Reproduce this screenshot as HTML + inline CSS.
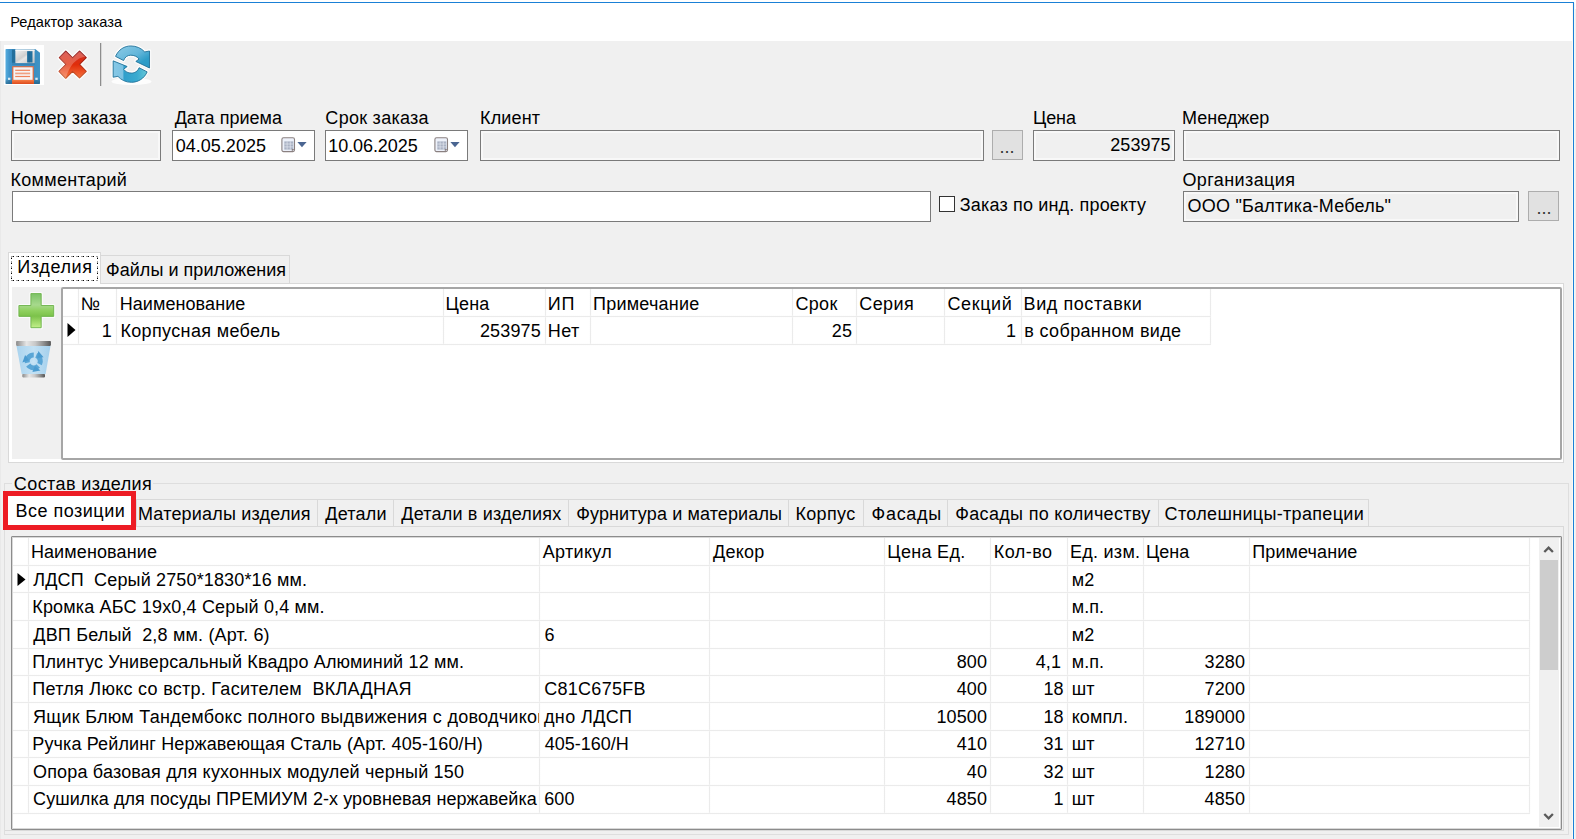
<!DOCTYPE html>
<html><head><meta charset="utf-8"><title>Редактор заказа</title>
<style>
html,body{margin:0;padding:0}
body{width:1576px;height:839px;position:relative;overflow:hidden;background:#fff;font-family:"Liberation Sans",sans-serif;font-size:18px;color:#000}
.a{position:absolute}
.t{position:absolute;white-space:pre}
svg{position:absolute;overflow:visible}
</style></head><body>
<div class="a" style="left:0px;top:41px;width:1572px;height:798px;background:#f0f0f0;"></div>
<div class="a" style="left:0px;top:41px;width:1px;height:798px;background:#e9e9e9;"></div>
<div class="a" style="left:1572px;top:3px;width:1px;height:836px;background:#fdf8f2;"></div>
<div class="a" style="left:0px;top:2px;width:1574px;height:1px;background:#1a80d6;"></div>
<div class="a" style="left:1573px;top:2px;width:1px;height:837px;background:#1a80d6;"></div>
<div class="a" style="left:1574px;top:3px;width:1px;height:836px;background:#f4f6f8;"></div>
<div class="a" style="left:1575px;top:9px;width:1px;height:830px;background:#efefef;"></div>
<div class="t" style="left:10.17px;top:14.00px;font-size:14.6px;line-height:16px;color:#000;letter-spacing:0.054px;">Редактор заказа</div>
<svg style="left:4px;top:45px" width="40" height="40" viewBox="0 0 40 40">
<defs>
<linearGradient id="fb" x1="0" x2="1" y1="0" y2="0"><stop offset="0" stop-color="#57aee0"/><stop offset="0.12" stop-color="#3f93c9"/><stop offset="0.75" stop-color="#3a8cc0"/><stop offset="1" stop-color="#3f93c4"/></linearGradient>
<linearGradient id="fs" x1="0" x2="1" y1="0" y2="1"><stop offset="0" stop-color="#f4f4f4"/><stop offset="0.45" stop-color="#cfcfcf"/><stop offset="0.55" stop-color="#e6e6e6"/><stop offset="1" stop-color="#bdbdbd"/></linearGradient>
<linearGradient id="fo" x1="0" x2="0" y1="0" y2="1"><stop offset="0" stop-color="#f67d45"/><stop offset="1" stop-color="#dd4a1c"/></linearGradient>
<linearGradient id="fv" x1="0" x2="0" y1="0" y2="1"><stop offset="0" stop-color="#000" stop-opacity="0"/><stop offset="0.85" stop-color="#000" stop-opacity="0"/><stop offset="1" stop-color="#0a3c5c" stop-opacity="0.45"/></linearGradient>
</defs>
<rect x="0" y="0" width="40" height="40" fill="#fff"/>
<path d="M2.3 4 H31.2 L36 7.8 V38.2 Q36 39 35.2 39 H2.3 Q1.5 39 1.5 38.2 V4.8 Q1.5 4 2.3 4Z" fill="url(#fb)"/>
<path d="M2.3 4 H31.2 L36 7.8 V38.2 Q36 39 35.2 39 H2.3 Q1.5 39 1.5 38.2 V4.8 Q1.5 4 2.3 4Z" fill="url(#fv)"/>
<rect x="7.9" y="4.6" width="3.6" height="13.2" fill="#246f9c"/>
<rect x="11.4" y="4.6" width="19.2" height="13.8" fill="url(#fs)"/>
<rect x="11.4" y="4.6" width="19.2" height="1.2" fill="#fafafa"/>
<rect x="23.1" y="6.2" width="5.4" height="11.3" fill="#23709e"/>
<rect x="24.6" y="6.2" width="1" height="11.3" fill="#1b5f8a" opacity="0.7"/>
<rect x="8" y="18.2" width="23" height="1.6" fill="#3581b3" opacity="0.9"/>
<rect x="8.2" y="21.2" width="21.6" height="17.8" fill="#ea6a3c"/>
<rect x="9.4" y="22.3" width="19.2" height="12.6" fill="#eef7fb"/>
<rect x="10.2" y="23" width="17.6" height="11.2" fill="#fdf3ee" opacity="0.55"/>
<rect x="11.2" y="24.7" width="14.9" height="1.2" fill="#ef8259"/>
<rect x="11.2" y="27.6" width="14.9" height="1.7" fill="#f0a183"/>
<rect x="11.2" y="30.9" width="14.9" height="1.2" fill="#ef8259"/>
<rect x="8.2" y="34.9" width="21.6" height="4.1" fill="url(#fo)"/>
<rect x="4" y="32.7" width="2.4" height="2.2" fill="#dbe9f2"/>
<rect x="31.3" y="32.7" width="2.4" height="2.2" fill="#dbe9f2"/>
</svg>
<svg style="left:50px;top:40px" width="50" height="50" viewBox="0 0 50 50">
<defs>
<linearGradient id="xr" x1="0" x2="0" y1="0" y2="1"><stop offset="0" stop-color="#d22f26"/><stop offset="0.5" stop-color="#e02d0a"/><stop offset="1" stop-color="#f7743f"/></linearGradient>
<linearGradient id="xs" x1="0" x2="0" y1="0" y2="1"><stop offset="0" stop-color="#8e1010"/><stop offset="0.6" stop-color="#b83318"/><stop offset="1" stop-color="#d0602f"/></linearGradient>
<clipPath id="xc"><path d="M9.38 17.56 L15.75 11.19 L22.60 17.84 L29.55 11.19 L36.21 17.56 L29.55 24.41 L36.21 31.35 L29.55 37.92 L22.60 31.35 L15.75 38.21 L9.09 31.35 L16.04 24.41Z"/></clipPath>
</defs>
<path d="M9.38 17.56 L15.75 11.19 L22.60 17.84 L29.55 11.19 L36.21 17.56 L29.55 24.41 L36.21 31.35 L29.55 37.92 L22.60 31.35 L15.75 38.21 L9.09 31.35 L16.04 24.41Z" fill="none" stroke="#fff" stroke-opacity="0.7" stroke-width="4" stroke-linejoin="round"/>
<path d="M9.38 17.56 L15.75 11.19 L22.60 17.84 L29.55 11.19 L36.21 17.56 L29.55 24.41 L36.21 31.35 L29.55 37.92 L22.60 31.35 L15.75 38.21 L9.09 31.35 L16.04 24.41Z" fill="url(#xr)" stroke="url(#xs)" stroke-width="1.2" stroke-linejoin="round"/>
<g clip-path="url(#xc)"><path d="M0 0 H42 L36.2 16.6 Q22 18 15.8 38 L0 50Z" fill="#fff" opacity="0.24"/></g>
</svg>
<svg style="left:95px;top:40px" width="62" height="50" viewBox="0 0 62 50">
<defs>
<linearGradient id="r1" x1="0" x2="1" y1="0" y2="1"><stop offset="0" stop-color="#8dcbe6"/><stop offset="0.5" stop-color="#63b6da"/><stop offset="0.75" stop-color="#2f9dc8"/><stop offset="1" stop-color="#2a97c4"/></linearGradient>
<linearGradient id="r2" x1="0" x2="1" y1="0" y2="0"><stop offset="0" stop-color="#86c8e6"/><stop offset="0.28" stop-color="#7cc2e2"/><stop offset="0.32" stop-color="#2f9fcb"/><stop offset="0.7" stop-color="#3aaad0"/><stop offset="1" stop-color="#66c8d6"/></linearGradient>
</defs>
<ellipse cx="36.5" cy="41.5" rx="20" ry="3.6" fill="#fff" opacity="0.85"/>
<path d="M20.56 16.39 C23.5 9.5 29.5 5.96 35.76 5.96 C41.5 5.96 46.2 8.2 49.76 11.92 L54.53 11.0 L54.53 28.01 L40.82 21.45 L44.1 19.07 C42.2 16.4 39 15.2 35.76 15.2 C32.5 15.2 29.8 17 28.6 20.56 Z" fill="none" stroke="#fff" stroke-opacity="0.8" stroke-width="3.4" stroke-linejoin="round"/>
<path d="M52.14 31.88 C49.2 38.6 43 42.31 36.35 42.31 C30.8 42.31 26.2 40 22.94 36.35 L18.18 37.2 L18.18 20.86 L32.18 26.52 L28.6 29.2 C30.3 31.8 33.2 33.07 36.35 33.07 C39.6 33.07 42.7 31.5 44.1 27.71 Z" fill="none" stroke="#fff" stroke-opacity="0.8" stroke-width="3.4" stroke-linejoin="round"/>
<path d="M20.56 16.39 C23.5 9.5 29.5 5.96 35.76 5.96 C41.5 5.96 46.2 8.2 49.76 11.92 L54.53 11.0 L54.53 28.01 L40.82 21.45 L44.1 19.07 C42.2 16.4 39 15.2 35.76 15.2 C32.5 15.2 29.8 17 28.6 20.56 Z" fill="url(#r1)" stroke="#1f7199" stroke-width="0.9" stroke-linejoin="round"/>
<path d="M52.14 31.88 C49.2 38.6 43 42.31 36.35 42.31 C30.8 42.31 26.2 40 22.94 36.35 L18.18 37.2 L18.18 20.86 L32.18 26.52 L28.6 29.2 C30.3 31.8 33.2 33.07 36.35 33.07 C39.6 33.07 42.7 31.5 44.1 27.71 Z" fill="url(#r2)" stroke="#1f7199" stroke-width="0.9" stroke-linejoin="round"/>
</svg>
<div class="a" style="left:100px;top:43px;width:1px;height:43px;background:#8d8d8d;"></div>
<div class="a" style="left:101px;top:43px;width:1px;height:43px;background:#d6d6d6;"></div>
<div class="t" style="left:10.79px;top:108.00px;font-size:18px;line-height:20px;color:#000;letter-spacing:0.092px;">Номер заказа</div>
<div class="t" style="left:174.65px;top:108.00px;font-size:18px;line-height:20px;color:#000;letter-spacing:0.030px;">Дата приема</div>
<div class="t" style="left:325.37px;top:108.00px;font-size:18px;line-height:20px;color:#000;letter-spacing:0.273px;">Срок заказа</div>
<div class="t" style="left:480.07px;top:108.00px;font-size:18px;line-height:20px;color:#000;letter-spacing:0.137px;">Клиент</div>
<div class="t" style="left:1033.07px;top:108.00px;font-size:18px;line-height:20px;color:#000;letter-spacing:-0.132px;">Цена</div>
<div class="t" style="left:1182.08px;top:108.00px;font-size:18px;line-height:20px;color:#000;letter-spacing:-0.003px;">Менеджер</div>
<div class="t" style="left:10.49px;top:170.00px;font-size:18px;line-height:20px;color:#000;letter-spacing:0.305px;">Комментарий</div>
<div class="t" style="left:1182.47px;top:170.00px;font-size:18px;line-height:20px;color:#000;letter-spacing:0.389px;">Организация</div>
<div class="a" style="left:11px;top:130px;width:150px;height:31px;background:#f0f0f0;border:1px solid #7a7a7a;box-sizing:border-box;box-shadow:inset 0 0 0 2px #f8f8f8;"></div>
<div class="a" style="left:172px;top:130px;width:143px;height:31px;background:#fff;border:1px solid #7a7a7a;box-sizing:border-box;"></div>
<div class="a" style="left:325px;top:130px;width:143px;height:31px;background:#fff;border:1px solid #7a7a7a;box-sizing:border-box;"></div>
<div class="a" style="left:480px;top:130px;width:504px;height:31px;background:#f0f0f0;border:1px solid #7a7a7a;box-sizing:border-box;box-shadow:inset 0 0 0 2px #f8f8f8;"></div>
<div class="a" style="left:1033px;top:130px;width:142px;height:31px;background:#f0f0f0;border:1px solid #7a7a7a;box-sizing:border-box;box-shadow:inset 0 0 0 2px #f8f8f8;"></div>
<div class="a" style="left:1183px;top:130px;width:377px;height:31px;background:#f0f0f0;border:1px solid #7a7a7a;box-sizing:border-box;box-shadow:inset 0 0 0 2px #f8f8f8;"></div>
<div class="a" style="left:12px;top:191px;width:919px;height:31px;background:#fff;border:1px solid #7a7a7a;box-sizing:border-box;"></div>
<div class="a" style="left:1183px;top:191px;width:336px;height:31px;background:#f0f0f0;border:1px solid #7a7a7a;box-sizing:border-box;box-shadow:inset 0 0 0 2px #f8f8f8;"></div>
<div class="t" style="left:175.67px;top:136.00px;font-size:18px;line-height:20px;color:#000;letter-spacing:0.024px;">04.05.2025</div>
<div class="t" style="left:328.29px;top:136.00px;font-size:18px;line-height:20px;color:#000;letter-spacing:-0.077px;">10.06.2025</div>
<div class="t" style="left:1110.28px;top:135.00px;font-size:18px;line-height:20px;color:#000;letter-spacing:0.058px;">253975</div>
<div class="t" style="left:1187.49px;top:196.00px;font-size:18px;line-height:20px;color:#000;letter-spacing:0.233px;">ООО &quot;Балтика-Мебель&quot;</div>
<div class="a" style="left:992px;top:130px;width:31px;height:30px;background:#e1e1e1;border:1px solid #adadad;box-sizing:border-box;"></div>
<div class="t" style="left:999.39px;top:137.00px;font-size:18px;line-height:20px;color:#333;letter-spacing:0.100px;">...</div>
<div class="a" style="left:1528px;top:191px;width:31px;height:30px;background:#e1e1e1;border:1px solid #adadad;box-sizing:border-box;"></div>
<div class="t" style="left:1536.40px;top:198.00px;font-size:18px;line-height:20px;color:#333;letter-spacing:0.100px;">...</div>
<div class="a" style="left:939px;top:196px;width:16px;height:16px;background:#fff;border:1px solid #333;box-sizing:border-box;"></div>
<div class="t" style="left:959.74px;top:195.00px;font-size:18px;line-height:20px;color:#000;letter-spacing:0.170px;">Заказ по инд. проекту</div>
<svg style="left:280.6px;top:136.6px" width="27" height="16" viewBox="0 0 27 16">
<rect x="0.9" y="0.8" width="12.6" height="13.8" rx="1.6" fill="#edf1fa" stroke="#8a8080" stroke-width="1.1"/>
<rect x="3.3" y="4.4" width="9" height="8.2" fill="#aab2c4"/>
<path d="M3.3 7 H12.3 M3.3 9.9 H12.3 M6.1 4.4 V12.6 M9.3 4.4 V12.6" stroke="#e9edf5" stroke-width="0.6"/>
<path d="M10.8 14.4 L13.3 11.9 L10.8 11.9Z" fill="#8a8080"/>
<path d="M16.4 5.1 H25.6 L21 10.3Z" fill="#4a6591"/>
</svg>
<svg style="left:433.6px;top:136.6px" width="27" height="16" viewBox="0 0 27 16">
<rect x="0.9" y="0.8" width="12.6" height="13.8" rx="1.6" fill="#edf1fa" stroke="#8a8080" stroke-width="1.1"/>
<rect x="3.3" y="4.4" width="9" height="8.2" fill="#aab2c4"/>
<path d="M3.3 7 H12.3 M3.3 9.9 H12.3 M6.1 4.4 V12.6 M9.3 4.4 V12.6" stroke="#e9edf5" stroke-width="0.6"/>
<path d="M10.8 14.4 L13.3 11.9 L10.8 11.9Z" fill="#8a8080"/>
<path d="M16.4 5.1 H25.6 L21 10.3Z" fill="#4a6591"/>
</svg>
<div class="a" style="left:8px;top:283px;width:1556px;height:180px;background:#fff;border:1px solid #d9d9d9;box-sizing:border-box;"></div>
<div class="a" style="left:12px;top:287px;width:50px;height:172px;background:#f0f0f0;"></div>
<div class="a" style="left:100px;top:255px;width:190px;height:29px;background:#f0f0f0;border:1px solid #d9d9d9;box-sizing:border-box;"></div>
<div class="a" style="left:8px;top:252px;width:93px;height:32px;background:#fff;border:1px solid #d9d9d9;box-sizing:border-box;border-bottom:none;"></div>
<div class="a" style="left:11px;top:256px;width:87px;height:1px;background:repeating-linear-gradient(90deg,#9a9a9a 0,#9a9a9a 2px,#000 2px,#000 3px,transparent 3px,transparent 5px);"></div>
<div class="a" style="left:11px;top:280px;width:87px;height:1px;background:repeating-linear-gradient(90deg,#9a9a9a 0,#9a9a9a 2px,#000 2px,#000 3px,transparent 3px,transparent 5px);"></div>
<div class="a" style="left:11px;top:256px;width:1px;height:25px;background:repeating-linear-gradient(180deg,#9a9a9a 0,#9a9a9a 2px,#000 2px,#000 3px,transparent 3px,transparent 5px);"></div>
<div class="a" style="left:97px;top:256px;width:1px;height:25px;background:repeating-linear-gradient(180deg,#9a9a9a 0,#9a9a9a 2px,#000 2px,#000 3px,transparent 3px,transparent 5px);"></div>
<div class="t" style="left:17.30px;top:257.00px;font-size:18px;line-height:20px;color:#000;letter-spacing:0.607px;">Изделия</div>
<div class="t" style="left:106.01px;top:260.00px;font-size:18px;line-height:20px;color:#000;letter-spacing:0.041px;">Файлы и приложения</div>
<svg style="left:14px;top:289px" width="44" height="44" viewBox="0 0 44 44">
<defs>
<linearGradient id="pg" x1="0" x2="0" y1="0" y2="1"><stop offset="0" stop-color="#7cc267"/><stop offset="0.33" stop-color="#a7d98d"/><stop offset="0.5" stop-color="#8fd05f"/><stop offset="0.66" stop-color="#7cc24a"/><stop offset="1" stop-color="#c2f08a"/></linearGradient>
</defs>
<path d="M16.9 4.6 H27.2 V16.5 H39.7 V27.4 H27.2 V38.7 H16.9 V27.4 H4.9 V16.5 H16.9 Z" fill="none" stroke="#fff" stroke-opacity="0.7" stroke-width="3.2" stroke-linejoin="round"/>
<path d="M16.9 4.6 H27.2 V16.5 H39.7 V27.4 H27.2 V38.7 H16.9 V27.4 H4.9 V16.5 H16.9 Z" fill="url(#pg)" stroke="#6cb24a" stroke-width="0.9" stroke-linejoin="round"/>
</svg>
<svg style="left:12px;top:337px" width="44" height="44" viewBox="0 0 44 44">
<defs>
<linearGradient id="tr" x1="0" x2="1" y1="0" y2="0"><stop offset="0" stop-color="#8a8a8a"/><stop offset="0.3" stop-color="#e6e6e6"/><stop offset="0.55" stop-color="#c8c8c8"/><stop offset="0.8" stop-color="#8c8c8c"/><stop offset="1" stop-color="#555"/></linearGradient>
<linearGradient id="tb" x1="0" x2="1" y1="0" y2="0"><stop offset="0" stop-color="#a9d3ee"/><stop offset="0.5" stop-color="#c3e1f4"/><stop offset="1" stop-color="#a3cfec"/></linearGradient>
</defs>
<path d="M4.5 9 H38.5 L33.6 37 H9.7Z" fill="url(#tb)"/>
<rect x="4.1" y="4" width="34.8" height="4.9" rx="0.8" fill="url(#tr)"/>
<rect x="10.3" y="36.9" width="22.7" height="3.5" rx="0.8" fill="url(#tr)"/>
<g transform="translate(21.7 24.4)">
<circle r="6.5" fill="none" stroke="#5aa6d6" stroke-width="5" stroke-dasharray="11.2 2.41" stroke-dashoffset="3" transform="rotate(-50)"/>
<g fill="#4a9bd0">
<path id="rh" d="M4.6 -10.4 L9.9 -4.2 L3.4 -3.4Z"/>
<use href="#rh" transform="rotate(120)"/>
<use href="#rh" transform="rotate(240)"/>
</g>
<path d="M0 -3.4 L1 -1 L3.2 1.6 L0.6 1.2 L0 3.4 L-0.8 1.2 L-3.2 1.6 L-1 -1Z" fill="#c6e3f5"/>
</g>
</svg>
<div class="a" style="left:61px;top:287px;width:1501px;height:173px;background:#fff;border:2px solid #a6a6a6;box-sizing:border-box;border-radius:2px;"></div>
<div class="a" style="left:77px;top:289px;width:3px;height:56px;background:linear-gradient(90deg,rgba(252,252,252,0) 0,rgba(250,250,250,0.6) 1px,#ebebeb 1px,#ebebeb 2px,rgba(250,250,250,0.6) 2px,rgba(252,252,252,0) 3px);"></div>
<div class="a" style="left:115px;top:289px;width:3px;height:56px;background:linear-gradient(90deg,rgba(252,252,252,0) 0,rgba(250,250,250,0.6) 1px,#ebebeb 1px,#ebebeb 2px,rgba(250,250,250,0.6) 2px,rgba(252,252,252,0) 3px);"></div>
<div class="a" style="left:442px;top:289px;width:3px;height:56px;background:linear-gradient(90deg,rgba(252,252,252,0) 0,rgba(250,250,250,0.6) 1px,#ebebeb 1px,#ebebeb 2px,rgba(250,250,250,0.6) 2px,rgba(252,252,252,0) 3px);"></div>
<div class="a" style="left:544px;top:289px;width:3px;height:56px;background:linear-gradient(90deg,rgba(252,252,252,0) 0,rgba(250,250,250,0.6) 1px,#ebebeb 1px,#ebebeb 2px,rgba(250,250,250,0.6) 2px,rgba(252,252,252,0) 3px);"></div>
<div class="a" style="left:589px;top:289px;width:3px;height:56px;background:linear-gradient(90deg,rgba(252,252,252,0) 0,rgba(250,250,250,0.6) 1px,#ebebeb 1px,#ebebeb 2px,rgba(250,250,250,0.6) 2px,rgba(252,252,252,0) 3px);"></div>
<div class="a" style="left:791px;top:289px;width:3px;height:56px;background:linear-gradient(90deg,rgba(252,252,252,0) 0,rgba(250,250,250,0.6) 1px,#ebebeb 1px,#ebebeb 2px,rgba(250,250,250,0.6) 2px,rgba(252,252,252,0) 3px);"></div>
<div class="a" style="left:855px;top:289px;width:3px;height:56px;background:linear-gradient(90deg,rgba(252,252,252,0) 0,rgba(250,250,250,0.6) 1px,#ebebeb 1px,#ebebeb 2px,rgba(250,250,250,0.6) 2px,rgba(252,252,252,0) 3px);"></div>
<div class="a" style="left:943px;top:289px;width:3px;height:56px;background:linear-gradient(90deg,rgba(252,252,252,0) 0,rgba(250,250,250,0.6) 1px,#ebebeb 1px,#ebebeb 2px,rgba(250,250,250,0.6) 2px,rgba(252,252,252,0) 3px);"></div>
<div class="a" style="left:1020px;top:289px;width:3px;height:56px;background:linear-gradient(90deg,rgba(252,252,252,0) 0,rgba(250,250,250,0.6) 1px,#ebebeb 1px,#ebebeb 2px,rgba(250,250,250,0.6) 2px,rgba(252,252,252,0) 3px);"></div>
<div class="a" style="left:1209px;top:289px;width:3px;height:56px;background:linear-gradient(90deg,rgba(252,252,252,0) 0,rgba(250,250,250,0.6) 1px,#ebebeb 1px,#ebebeb 2px,rgba(250,250,250,0.6) 2px,rgba(252,252,252,0) 3px);"></div>
<div class="a" style="left:63px;top:315px;width:1148px;height:3px;background:linear-gradient(180deg,rgba(252,252,252,0) 0,rgba(250,250,250,0.6) 1px,#ebebeb 1px,#ebebeb 2px,rgba(250,250,250,0.6) 2px,rgba(252,252,252,0) 3px);"></div>
<div class="a" style="left:63px;top:343px;width:1148px;height:3px;background:linear-gradient(180deg,rgba(252,252,252,0) 0,rgba(250,250,250,0.6) 1px,#ebebeb 1px,#ebebeb 2px,rgba(250,250,250,0.6) 2px,rgba(252,252,252,0) 3px);"></div>
<div class="t" style="left:80.71px;top:294.00px;font-size:18px;line-height:20px;color:#000;letter-spacing:0.100px;">№</div>
<div class="t" style="left:119.66px;top:294.00px;font-size:18px;line-height:20px;color:#000;letter-spacing:0.079px;">Наименование</div>
<div class="t" style="left:445.56px;top:294.00px;font-size:18px;line-height:20px;color:#000;letter-spacing:0.159px;">Цена</div>
<div class="t" style="left:547.66px;top:294.00px;font-size:18px;line-height:20px;color:#000;letter-spacing:0.891px;">ИП</div>
<div class="t" style="left:593.01px;top:294.00px;font-size:18px;line-height:20px;color:#000;letter-spacing:0.220px;">Примечание</div>
<div class="t" style="left:795.39px;top:294.00px;font-size:18px;line-height:20px;color:#000;letter-spacing:0.333px;">Срок</div>
<div class="t" style="left:859.22px;top:294.00px;font-size:18px;line-height:20px;color:#000;letter-spacing:0.420px;">Серия</div>
<div class="t" style="left:947.39px;top:294.00px;font-size:18px;line-height:20px;color:#000;letter-spacing:0.629px;">Секций</div>
<div class="t" style="left:1023.56px;top:294.00px;font-size:18px;line-height:20px;color:#000;letter-spacing:0.581px;">Вид поставки</div>
<div class="t" style="right:1464.23px;top:321.00px;font-size:18px;line-height:20px;color:#000;letter-spacing:0.100px;">1</div>
<div class="t" style="left:120.38px;top:321.00px;font-size:18px;line-height:20px;color:#000;letter-spacing:0.359px;">Корпусная мебель</div>
<div class="t" style="left:479.88px;top:321.00px;font-size:18px;line-height:20px;color:#000;letter-spacing:0.159px;">253975</div>
<div class="t" style="left:547.85px;top:321.00px;font-size:18px;line-height:20px;color:#000;letter-spacing:0.340px;">Нет</div>
<div class="t" style="right:724.00px;top:321.00px;font-size:18px;line-height:20px;color:#000;letter-spacing:0.100px;">25</div>
<div class="t" style="right:560.00px;top:321.00px;font-size:18px;line-height:20px;color:#000;letter-spacing:0.100px;">1</div>
<div class="t" style="left:1024.30px;top:321.00px;font-size:18px;line-height:20px;color:#000;letter-spacing:0.351px;">в собранном виде</div>
<svg style="left:67px;top:323px" width="9" height="14"><path d="M0.5 0 L8.5 7 L0.5 14Z" fill="#000"/></svg>
<div class="a" style="left:4px;top:483px;width:1565px;height:352px;border:1px solid #dedede;box-sizing:border-box;"></div>
<div class="a" style="left:12px;top:474px;width:141px;height:20px;background:#f0f0f0;"></div>
<div class="t" style="left:13.87px;top:474.00px;font-size:18px;line-height:20px;color:#000;letter-spacing:0.397px;">Состав изделия</div>
<div class="a" style="left:5px;top:526px;width:1559px;height:305px;border:1px solid #d9d9d9;box-sizing:border-box;border-left:none;"></div>
<div class="a" style="left:136px;top:499px;width:182px;height:28px;background:#f0f0f0;border:1px solid #d9d9d9;box-sizing:border-box;"></div>
<div class="t" style="left:137.95px;top:504.00px;font-size:18px;line-height:20px;color:#000;letter-spacing:0.196px;">Материалы изделия</div>
<div class="a" style="left:317px;top:499px;width:77px;height:28px;background:#f0f0f0;border:1px solid #d9d9d9;box-sizing:border-box;"></div>
<div class="t" style="left:325.32px;top:504.00px;font-size:18px;line-height:20px;color:#000;letter-spacing:0.215px;">Детали</div>
<div class="a" style="left:393px;top:499px;width:176px;height:28px;background:#f0f0f0;border:1px solid #d9d9d9;box-sizing:border-box;"></div>
<div class="t" style="left:401.32px;top:504.00px;font-size:18px;line-height:20px;color:#000;letter-spacing:0.183px;">Детали в изделиях</div>
<div class="a" style="left:568px;top:499px;width:221px;height:28px;background:#f0f0f0;border:1px solid #d9d9d9;box-sizing:border-box;"></div>
<div class="t" style="left:576.21px;top:504.00px;font-size:18px;line-height:20px;color:#000;letter-spacing:0.120px;">Фурнитура и материалы</div>
<div class="a" style="left:788px;top:499px;width:76px;height:28px;background:#f0f0f0;border:1px solid #d9d9d9;box-sizing:border-box;"></div>
<div class="t" style="left:795.44px;top:504.00px;font-size:18px;line-height:20px;color:#000;letter-spacing:0.329px;">Корпус</div>
<div class="a" style="left:863px;top:499px;width:85px;height:28px;background:#f0f0f0;border:1px solid #d9d9d9;box-sizing:border-box;"></div>
<div class="t" style="left:871.55px;top:504.00px;font-size:18px;line-height:20px;color:#000;letter-spacing:0.696px;">Фасады</div>
<div class="a" style="left:947px;top:499px;width:212px;height:28px;background:#f0f0f0;border:1px solid #d9d9d9;box-sizing:border-box;"></div>
<div class="t" style="left:955.26px;top:504.00px;font-size:18px;line-height:20px;color:#000;letter-spacing:0.321px;">Фасады по количеству</div>
<div class="a" style="left:1158px;top:499px;width:211px;height:28px;background:#f0f0f0;border:1px solid #d9d9d9;box-sizing:border-box;"></div>
<div class="t" style="left:1164.60px;top:504.00px;font-size:18px;line-height:20px;color:#000;letter-spacing:0.323px;">Столешницы-трапеции</div>
<div class="a" style="left:8px;top:496px;width:124px;height:31px;background:#fff;"></div>
<div class="a" style="left:3px;top:491px;width:133px;height:39px;border:5px solid #ed1c24;box-sizing:border-box;"></div>
<div class="t" style="left:15.38px;top:501.00px;font-size:18px;line-height:20px;color:#000;letter-spacing:0.512px;">Все позиции</div>
<div class="a" style="left:11px;top:536px;width:1551px;height:294px;background:#fff;border:1px solid #8c8c8c;box-sizing:border-box;box-shadow:inset 0 0 0 1px #d8d8d8;border-radius:1px;"></div>
<div class="a" style="left:13px;top:538px;width:1546px;height:289px;background:#fff;"></div>
<div class="a" style="left:27px;top:538px;width:3px;height:276px;background:linear-gradient(90deg,rgba(252,252,252,0) 0,rgba(250,250,250,0.6) 1px,#ebebeb 1px,#ebebeb 2px,rgba(250,250,250,0.6) 2px,rgba(252,252,252,0) 3px);"></div>
<div class="a" style="left:538px;top:538px;width:3px;height:276px;background:linear-gradient(90deg,rgba(252,252,252,0) 0,rgba(250,250,250,0.6) 1px,#ebebeb 1px,#ebebeb 2px,rgba(250,250,250,0.6) 2px,rgba(252,252,252,0) 3px);"></div>
<div class="a" style="left:708px;top:538px;width:3px;height:276px;background:linear-gradient(90deg,rgba(252,252,252,0) 0,rgba(250,250,250,0.6) 1px,#ebebeb 1px,#ebebeb 2px,rgba(250,250,250,0.6) 2px,rgba(252,252,252,0) 3px);"></div>
<div class="a" style="left:883px;top:538px;width:3px;height:276px;background:linear-gradient(90deg,rgba(252,252,252,0) 0,rgba(250,250,250,0.6) 1px,#ebebeb 1px,#ebebeb 2px,rgba(250,250,250,0.6) 2px,rgba(252,252,252,0) 3px);"></div>
<div class="a" style="left:989px;top:538px;width:3px;height:276px;background:linear-gradient(90deg,rgba(252,252,252,0) 0,rgba(250,250,250,0.6) 1px,#ebebeb 1px,#ebebeb 2px,rgba(250,250,250,0.6) 2px,rgba(252,252,252,0) 3px);"></div>
<div class="a" style="left:1066px;top:538px;width:3px;height:276px;background:linear-gradient(90deg,rgba(252,252,252,0) 0,rgba(250,250,250,0.6) 1px,#ebebeb 1px,#ebebeb 2px,rgba(250,250,250,0.6) 2px,rgba(252,252,252,0) 3px);"></div>
<div class="a" style="left:1142px;top:538px;width:3px;height:276px;background:linear-gradient(90deg,rgba(252,252,252,0) 0,rgba(250,250,250,0.6) 1px,#ebebeb 1px,#ebebeb 2px,rgba(250,250,250,0.6) 2px,rgba(252,252,252,0) 3px);"></div>
<div class="a" style="left:1248px;top:538px;width:3px;height:276px;background:linear-gradient(90deg,rgba(252,252,252,0) 0,rgba(250,250,250,0.6) 1px,#ebebeb 1px,#ebebeb 2px,rgba(250,250,250,0.6) 2px,rgba(252,252,252,0) 3px);"></div>
<div class="a" style="left:1528px;top:538px;width:3px;height:276px;background:linear-gradient(90deg,rgba(252,252,252,0) 0,rgba(250,250,250,0.6) 1px,#ebebeb 1px,#ebebeb 2px,rgba(250,250,250,0.6) 2px,rgba(252,252,252,0) 3px);"></div>
<div class="a" style="left:13px;top:564px;width:1517px;height:3px;background:linear-gradient(180deg,rgba(252,252,252,0) 0,rgba(250,250,250,0.6) 1px,#ebebeb 1px,#ebebeb 2px,rgba(250,250,250,0.6) 2px,rgba(252,252,252,0) 3px);"></div>
<div class="a" style="left:13px;top:591px;width:1517px;height:3px;background:linear-gradient(180deg,rgba(252,252,252,0) 0,rgba(250,250,250,0.6) 1px,#ebebeb 1px,#ebebeb 2px,rgba(250,250,250,0.6) 2px,rgba(252,252,252,0) 3px);"></div>
<div class="a" style="left:13px;top:619px;width:1517px;height:3px;background:linear-gradient(180deg,rgba(252,252,252,0) 0,rgba(250,250,250,0.6) 1px,#ebebeb 1px,#ebebeb 2px,rgba(250,250,250,0.6) 2px,rgba(252,252,252,0) 3px);"></div>
<div class="a" style="left:13px;top:647px;width:1517px;height:3px;background:linear-gradient(180deg,rgba(252,252,252,0) 0,rgba(250,250,250,0.6) 1px,#ebebeb 1px,#ebebeb 2px,rgba(250,250,250,0.6) 2px,rgba(252,252,252,0) 3px);"></div>
<div class="a" style="left:13px;top:674px;width:1517px;height:3px;background:linear-gradient(180deg,rgba(252,252,252,0) 0,rgba(250,250,250,0.6) 1px,#ebebeb 1px,#ebebeb 2px,rgba(250,250,250,0.6) 2px,rgba(252,252,252,0) 3px);"></div>
<div class="a" style="left:13px;top:701px;width:1517px;height:3px;background:linear-gradient(180deg,rgba(252,252,252,0) 0,rgba(250,250,250,0.6) 1px,#ebebeb 1px,#ebebeb 2px,rgba(250,250,250,0.6) 2px,rgba(252,252,252,0) 3px);"></div>
<div class="a" style="left:13px;top:729px;width:1517px;height:3px;background:linear-gradient(180deg,rgba(252,252,252,0) 0,rgba(250,250,250,0.6) 1px,#ebebeb 1px,#ebebeb 2px,rgba(250,250,250,0.6) 2px,rgba(252,252,252,0) 3px);"></div>
<div class="a" style="left:13px;top:756px;width:1517px;height:3px;background:linear-gradient(180deg,rgba(252,252,252,0) 0,rgba(250,250,250,0.6) 1px,#ebebeb 1px,#ebebeb 2px,rgba(250,250,250,0.6) 2px,rgba(252,252,252,0) 3px);"></div>
<div class="a" style="left:13px;top:784px;width:1517px;height:3px;background:linear-gradient(180deg,rgba(252,252,252,0) 0,rgba(250,250,250,0.6) 1px,#ebebeb 1px,#ebebeb 2px,rgba(250,250,250,0.6) 2px,rgba(252,252,252,0) 3px);"></div>
<div class="a" style="left:13px;top:812px;width:1517px;height:3px;background:linear-gradient(180deg,rgba(252,252,252,0) 0,rgba(250,250,250,0.6) 1px,#ebebeb 1px,#ebebeb 2px,rgba(250,250,250,0.6) 2px,rgba(252,252,252,0) 3px);"></div>
<div class="t" style="left:30.88px;top:542.00px;font-size:18px;line-height:20px;color:#000;letter-spacing:0.114px;">Наименование</div>
<div class="t" style="left:542.67px;top:542.00px;font-size:18px;line-height:20px;color:#000;letter-spacing:0.339px;">Артикул</div>
<div class="t" style="left:713.06px;top:542.00px;font-size:18px;line-height:20px;color:#000;letter-spacing:0.235px;">Декор</div>
<div class="t" style="left:887.30px;top:542.00px;font-size:18px;line-height:20px;color:#000;letter-spacing:0.301px;">Цена Ед.</div>
<div class="t" style="left:993.85px;top:542.00px;font-size:18px;line-height:20px;color:#000;letter-spacing:0.438px;">Кол-во</div>
<div class="t" style="left:1069.88px;top:542.00px;font-size:18px;line-height:20px;color:#000;letter-spacing:0.281px;">Ед. изм.</div>
<div class="t" style="left:1145.88px;top:542.00px;font-size:18px;line-height:20px;color:#000;letter-spacing:0.057px;">Цена</div>
<div class="t" style="left:1252.30px;top:542.00px;font-size:18px;line-height:20px;color:#000;letter-spacing:0.093px;">Примечание</div>
<div class="a" style="left:29px;top:566px;width:510px;height:27px;overflow:hidden">
<div class="t" style="left:4.30px;top:4.00px;font-size:18px;line-height:20px;color:#000;letter-spacing:0.146px;">ЛДСП  Серый 2750*1830*16 мм.</div>
</div>
<div class="t" style="left:1071.70px;top:570.00px;font-size:18px;line-height:20px;color:#000;letter-spacing:0.100px;">м2</div>
<div class="a" style="left:29px;top:593px;width:510px;height:27px;overflow:hidden">
<div class="t" style="left:3.30px;top:4.00px;font-size:18px;line-height:20px;color:#000;letter-spacing:0.157px;">Кромка АБС 19х0,4 Серый 0,4 мм.</div>
</div>
<div class="t" style="left:1071.70px;top:597.00px;font-size:18px;line-height:20px;color:#000;letter-spacing:0.100px;">м.п.</div>
<div class="a" style="left:29px;top:621px;width:510px;height:27px;overflow:hidden">
<div class="t" style="left:4.30px;top:4.00px;font-size:18px;line-height:20px;color:#000;letter-spacing:0.184px;">ДВП Белый  2,8 мм. (Арт. 6)</div>
</div>
<div class="t" style="left:544.50px;top:625.00px;font-size:18px;line-height:20px;color:#000;letter-spacing:0.100px;">6</div>
<div class="t" style="left:1071.70px;top:625.00px;font-size:18px;line-height:20px;color:#000;letter-spacing:0.100px;">м2</div>
<div class="a" style="left:29px;top:649px;width:510px;height:27px;overflow:hidden">
<div class="t" style="left:3.30px;top:3.00px;font-size:18px;line-height:20px;color:#000;letter-spacing:0.158px;">Плинтус Универсальный Квадро Алюминий 12 мм.</div>
</div>
<div class="t" style="right:589.00px;top:652.00px;font-size:18px;line-height:20px;color:#000;letter-spacing:0.100px;">800</div>
<div class="t" style="right:515.00px;top:652.00px;font-size:18px;line-height:20px;color:#000;letter-spacing:0.100px;">4,1</div>
<div class="t" style="left:1071.70px;top:652.00px;font-size:18px;line-height:20px;color:#000;letter-spacing:0.100px;">м.п.</div>
<div class="t" style="right:331.00px;top:652.00px;font-size:18px;line-height:20px;color:#000;letter-spacing:0.100px;">3280</div>
<div class="a" style="left:29px;top:676px;width:510px;height:27px;overflow:hidden">
<div class="t" style="left:3.30px;top:3.00px;font-size:18px;line-height:20px;color:#000;letter-spacing:0.270px;">Петля Люкс со встр. Гасителем  ВКЛАДНАЯ</div>
</div>
<div class="t" style="left:544.27px;top:679.00px;font-size:18px;line-height:20px;color:#000;letter-spacing:0.269px;">C81C675FB</div>
<div class="t" style="right:589.00px;top:679.00px;font-size:18px;line-height:20px;color:#000;letter-spacing:0.100px;">400</div>
<div class="t" style="right:512.33px;top:679.00px;font-size:18px;line-height:20px;color:#000;letter-spacing:0.100px;">18</div>
<div class="t" style="left:1071.70px;top:679.00px;font-size:18px;line-height:20px;color:#000;letter-spacing:0.100px;">шт</div>
<div class="t" style="right:331.00px;top:679.00px;font-size:18px;line-height:20px;color:#000;letter-spacing:0.100px;">7200</div>
<div class="a" style="left:29px;top:703px;width:510px;height:27px;overflow:hidden">
<div class="t" style="left:4.10px;top:4.00px;font-size:18px;line-height:20px;color:#000;letter-spacing:0.265px;">Ящик Блюм Тандембокс полного выдвижения с доводчиком</div>
</div>
<div class="t" style="left:543.97px;top:707.00px;font-size:18px;line-height:20px;color:#000;letter-spacing:0.380px;">дно ЛДСП</div>
<div class="t" style="right:589.00px;top:707.00px;font-size:18px;line-height:20px;color:#000;letter-spacing:0.100px;">10500</div>
<div class="t" style="right:512.33px;top:707.00px;font-size:18px;line-height:20px;color:#000;letter-spacing:0.100px;">18</div>
<div class="t" style="left:1071.70px;top:707.00px;font-size:18px;line-height:20px;color:#000;letter-spacing:0.100px;">компл.</div>
<div class="t" style="right:331.00px;top:707.00px;font-size:18px;line-height:20px;color:#000;letter-spacing:0.100px;">189000</div>
<div class="a" style="left:29px;top:731px;width:510px;height:27px;overflow:hidden">
<div class="t" style="left:3.30px;top:3.00px;font-size:18px;line-height:20px;color:#000;letter-spacing:0.130px;">Ручка Рейлинг Нержавеющая Сталь (Арт. 405-160/H)</div>
</div>
<div class="t" style="left:544.80px;top:734.00px;font-size:18px;line-height:20px;color:#000;letter-spacing:0.002px;">405-160/H</div>
<div class="t" style="right:589.00px;top:734.00px;font-size:18px;line-height:20px;color:#000;letter-spacing:0.100px;">410</div>
<div class="t" style="right:512.27px;top:734.00px;font-size:18px;line-height:20px;color:#000;letter-spacing:0.100px;">31</div>
<div class="t" style="left:1071.70px;top:734.00px;font-size:18px;line-height:20px;color:#000;letter-spacing:0.100px;">шт</div>
<div class="t" style="right:331.00px;top:734.00px;font-size:18px;line-height:20px;color:#000;letter-spacing:0.100px;">12710</div>
<div class="a" style="left:29px;top:758px;width:510px;height:27px;overflow:hidden">
<div class="t" style="left:4.03px;top:4.00px;font-size:18px;line-height:20px;color:#000;letter-spacing:0.177px;">Опора базовая для кухонных модулей черный 150</div>
</div>
<div class="t" style="right:589.00px;top:762.00px;font-size:18px;line-height:20px;color:#000;letter-spacing:0.100px;">40</div>
<div class="t" style="right:512.24px;top:762.00px;font-size:18px;line-height:20px;color:#000;letter-spacing:0.100px;">32</div>
<div class="t" style="left:1071.70px;top:762.00px;font-size:18px;line-height:20px;color:#000;letter-spacing:0.100px;">шт</div>
<div class="t" style="right:331.00px;top:762.00px;font-size:18px;line-height:20px;color:#000;letter-spacing:0.100px;">1280</div>
<div class="a" style="left:29px;top:786px;width:510px;height:27px;overflow:hidden">
<div class="t" style="left:4.07px;top:3.00px;font-size:18px;line-height:20px;color:#000;letter-spacing:0.072px;">Сушилка для посуды ПРЕМИУМ 2-х уровневая нержавейка</div>
</div>
<div class="t" style="left:544.27px;top:789.00px;font-size:18px;line-height:20px;color:#000;letter-spacing:0.067px;">600</div>
<div class="t" style="right:589.00px;top:789.00px;font-size:18px;line-height:20px;color:#000;letter-spacing:0.100px;">4850</div>
<div class="t" style="right:512.27px;top:789.00px;font-size:18px;line-height:20px;color:#000;letter-spacing:0.100px;">1</div>
<div class="t" style="left:1071.70px;top:789.00px;font-size:18px;line-height:20px;color:#000;letter-spacing:0.100px;">шт</div>
<div class="t" style="right:331.00px;top:789.00px;font-size:18px;line-height:20px;color:#000;letter-spacing:0.100px;">4850</div>
<svg style="left:16.5px;top:573px" width="9" height="14"><path d="M0.5 0 L8.5 6.5 L0.5 13Z" fill="#000"/></svg>
<div class="a" style="left:1539px;top:538px;width:20px;height:289px;background:#f0f0f0;"></div>
<div class="a" style="left:1540px;top:560px;width:18px;height:110px;background:#cdcdcd;"></div>
<svg style="left:1543px;top:545px" width="12" height="9"><path d="M1.3 7 L5.6 2.6 L9.9 7" fill="none" stroke="#5a5a5a" stroke-width="2.3"/></svg>
<svg style="left:1543px;top:812px" width="12" height="9"><path d="M1.3 2 L5.6 6.4 L9.9 2" fill="none" stroke="#5a5a5a" stroke-width="2.3"/></svg>
</body></html>
